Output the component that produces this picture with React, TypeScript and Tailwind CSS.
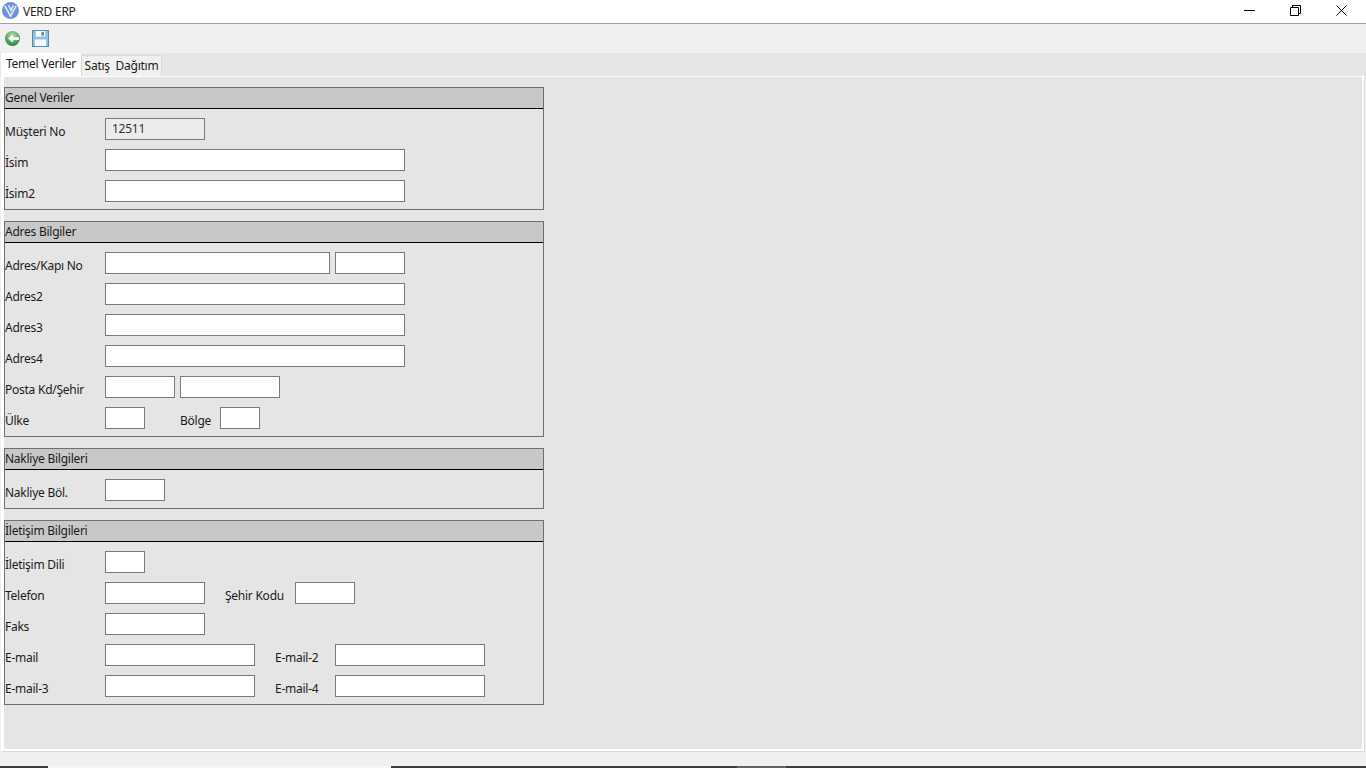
// one grey boxed block of the form, with its title strip
function Section({ title, children }: { title: string; children: React.ReactNode }) {
  return (
    <div className="w-[540px] border border-[#6f6f6f]">
      <div className="h-[21px] bg-[#c8c8c8] border-b border-black leading-[20px] text-[#1a1a1a]">{title}</div>
      <div className="flex flex-col gap-[9px] pt-[9px] pb-[7px]">{children}</div>
    </div>
  );
}

function Row({ children }: { children: React.ReactNode }) {
  return <div className="flex h-[22px]">{children}</div>;
}

function Label({ text, width = "w-[100px]" }: { text: string; width?: string }) {
  return <span className={`${width} leading-[28px] text-[#1a1a1a] whitespace-pre`}>{text}</span>;
}

function Field({ width, value, disabled }: { width: string; value?: string; disabled?: boolean }) {
  return (
    <div
      className={`${width} h-[22px] border border-[#7a7a7a] px-[6px] leading-[19px] text-[#333] ${
        disabled ? "bg-[#ececec]" : "bg-white"
      }`}
    >
      {value}
    </div>
  );
}

export default function App() {
  return (
    <div className="w-[1366px] h-[768px] overflow-hidden flex flex-col bg-[#f0f0f0] text-[12px] tracking-[-0.25px] font-['Noto_Sans',sans-serif]">
      {/* title bar */}
      <div className="h-[24px] bg-white border-b border-[#a0a0a0] flex shrink-0">
        <svg width="17" height="17" viewBox="0 0 18 18" className="ml-[2px] mt-[2px]">
          <circle cx="9" cy="9" r="9" fill="#6d94d8" />
          <path d="M3 4 L9 15 L15 4 M7 3.5 L9.5 9 L12 3.5" fill="none" stroke="#e8eefa" strokeWidth="1.6" />
        </svg>
        <span className="ml-[4px] leading-[23px] text-[#222]">VERD ERP</span>
        <div className="ml-auto mr-[2px] flex h-[21px]">
          <div className="w-[46px] flex items-center justify-center">
            <svg width="11" height="11" viewBox="0 0 11 11" stroke="black">
              <path d="M0 5.5h11" />
            </svg>
          </div>
          <div className="w-[46px] flex items-center justify-center">
            <svg width="11" height="11" viewBox="0 0 11 11" fill="none" stroke="black">
              <path d="M.5 2.5h8v8h-8z M2.5 2.5v-2h8v8h-2" />
            </svg>
          </div>
          <div className="w-[46px] flex items-center justify-center">
            <svg width="11" height="11" viewBox="0 0 11 11" stroke="black">
              <path d="M.5 .5l10 10M10.5 .5l-10 10" />
            </svg>
          </div>
        </div>
      </div>

      {/* toolbar */}
      <div className="h-[29px] flex items-center shrink-0 pl-[4px] gap-[11px] bg-[#f0f0f0]">
        <svg width="17" height="17" viewBox="0 0 17 17">
          <defs>
            <radialGradient id="ball" cx="50%" cy="30%" r="75%">
              <stop offset="0%" stopColor="#b6e0a6" />
              <stop offset="100%" stopColor="#1f7a35" />
            </radialGradient>
          </defs>
          <circle cx="8.5" cy="8.5" r="7.5" fill="url(#ball)" />
          <path d="M15 7H9V4.5L4 8.5 9 12.5V10H15z" fill="#f4fbf2" />
        </svg>
        <svg width="17" height="17" viewBox="0 0 18 18">
          <rect x=".5" y=".5" width="17" height="17" fill="#8fc0e4" stroke="#4f86ad" />
          <rect x="4" y="1" width="10" height="6" fill="#f4f8fb" />
          <rect x="10" y="2" width="2.5" height="4" fill="#4f86ad" />
          <rect x="3" y="10" width="12" height="7" fill="#f4f8fb" />
        </svg>
      </div>

      {/* tabs */}
      <div className="h-[23px] bg-[#e6e6e6] flex items-end pl-[1px] shrink-0">
        <div className="w-[80px] h-[23px] bg-white text-center leading-[21px] text-[#1a1a1a]">Temel Veriler</div>
        <div className="w-[81px] h-[21px] bg-[#f0f0f0] border border-b-0 border-[#d9d9d9] text-center leading-[20px] text-[#1a1a1a] whitespace-pre">
          Satış  Dağıtım
        </div>
      </div>

      {/* pane */}
      <div className="ml-[1px] w-[1363px] h-[675px] shrink-0 border-l-[3px] border-r-2 border-b-2 border-t border-white shadow-[1px_1px_0_#d9d9d9] bg-[#e5e5e5] pt-[10px] flex flex-col gap-[11px]">
        <Section title="Genel Veriler">
          <Row>
            <Label text="Müşteri No" />
            <Field width="w-[100px]" value="12511" disabled />
          </Row>
          <Row>
            <Label text="İsim" />
            <Field width="w-[300px]" />
          </Row>
          <Row>
            <Label text="İsim2" />
            <Field width="w-[300px]" />
          </Row>
        </Section>

        <Section title="Adres Bilgiler">
          <Row>
            <Label text="Adres/Kapı No" />
            <div className="flex gap-[5px]">
              <Field width="w-[225px]" />
              <Field width="w-[70px]" />
            </div>
          </Row>
          <Row>
            <Label text="Adres2" />
            <Field width="w-[300px]" />
          </Row>
          <Row>
            <Label text="Adres3" />
            <Field width="w-[300px]" />
          </Row>
          <Row>
            <Label text="Adres4" />
            <Field width="w-[300px]" />
          </Row>
          <Row>
            <Label text="Posta Kd/Şehir" />
            <div className="flex gap-[5px]">
              <Field width="w-[70px]" />
              <Field width="w-[100px]" />
            </div>
          </Row>
          <Row>
            <Label text="Ülke" />
            <Field width="w-[40px]" />
            <Label text="Bölge" width="w-[40px] ml-[35px]" />
            <Field width="w-[40px]" />
          </Row>
        </Section>

        <Section title="Nakliye Bilgileri">
          <Row>
            <Label text="Nakliye Böl." />
            <Field width="w-[60px]" />
          </Row>
        </Section>

        <Section title="İletişim Bilgileri">
          <Row>
            <Label text="İletişim Dili" />
            <Field width="w-[40px]" />
          </Row>
          <Row>
            <Label text="Telefon" />
            <Field width="w-[100px]" />
            <Label text="Şehir Kodu" width="w-[70px] ml-[20px]" />
            <Field width="w-[60px]" />
          </Row>
          <Row>
            <Label text="Faks" />
            <Field width="w-[100px]" />
          </Row>
          <Row>
            <Label text="E-mail" />
            <Field width="w-[150px]" />
            <Label text="E-mail-2" width="w-[60px] ml-[20px]" />
            <Field width="w-[150px]" />
          </Row>
          <Row>
            <Label text="E-mail-3" />
            <Field width="w-[150px]" />
            <Label text="E-mail-4" width="w-[60px] ml-[20px]" />
            <Field width="w-[150px]" />
          </Row>
        </Section>
      </div>

      {/* strip of the desktop taskbar at the very bottom */}
      <div className="mt-auto h-[2px] bg-[#3d3d3d] flex shrink-0">
        <div className="ml-[48px] w-[343px] bg-[#f4f4f4]" />
        <div className="ml-[346px] w-[49px] bg-[#636363]" />
      </div>
    </div>
  );
}
